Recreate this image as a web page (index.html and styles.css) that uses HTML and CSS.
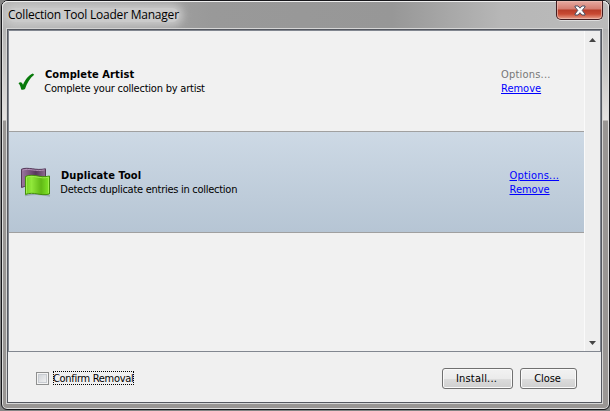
FILE: index.html
```html
<!DOCTYPE html>
<html lang="en">
<head>
<meta charset="utf-8">
<title>Collection Tool Loader Manager</title>
<link rel="stylesheet" href="styles.css">
</head>
<body>
<div class="window">
  <header class="titlebar">
    <h1 class="title"><span class="title-text">Collection Tool Loader Manager</span></h1>
    <button class="close-box" aria-label="Close window">
      <svg width="12" height="11" viewBox="0 0 12 11"><path d="M1 1H4L6 3.2L8 1H11V2L8.2 5.4L11 9V10H8L6 7.7L4 10H1V9L3.8 5.4L1 2Z" fill="#fff" stroke="#4b4e61" stroke-width="1"/></svg>
    </button>
  </header>
  <main class="client">
    <section class="list-box">
      <div class="list">
        <article class="row">
          <svg class="check" width="17" height="18" viewBox="0 0 17 18"><path d="M.5 10.2C2 8.7 4 8.9 5 11.8C7.4 6.5 10.5 2.2 14.8.5L16.2 1.7C11.8 5.2 9 10 7 16.1C6 17 4.3 17 3.2 16.6C2.7 13.8 2 11.8.5 10.2Z" fill="#087a0b"/></svg>
          <div class="info info-first"><b class="name">Complete Artist</b><span class="desc desc-first">Complete your collection by artist</span></div>
          <div class="actions"><span class="option off">Options...</span><a class="remove">Remove</a></div>
        </article>
        <article class="row selected">
          <svg class="flags" width="32" height="30" viewBox="0 0 32 30">
            <defs>
              <linearGradient id="purple"><stop stop-color="#9b76a0"/><stop offset=".35" stop-color="#765179"/><stop offset=".6" stop-color="#56385b"/><stop offset="1" stop-color="#8f6b91"/></linearGradient>
              <linearGradient id="green"><stop stop-color="#72cf20"/><stop offset=".25" stop-color="#91e83b"/><stop offset=".65" stop-color="#61b915"/><stop offset="1" stop-color="#83e929"/></linearGradient>
            </defs>
            <path d="M1.5 2.2C8-.5 16 4 25.5 1.8V18.5C17 22 9 17 1.5 20.5Z" fill="url(#purple)" stroke="#55395a"/>
            <path d="M2.5 3.2C9 .8 16 5 24.5 2.9" fill="none" stroke="#b391b7"/>
            <path d="M5 28.5Q18 26 30 29" fill="none" stroke="#7f9097" stroke-width="1.5" opacity=".6"/>
            <path d="M5.5 9.5C13 6 20 11.5 29.5 9V27C20 29.5 14 24 5.5 27.5Z" fill="url(#green)" stroke="#448f0b"/>
            <path d="M6.5 26.2V10.2C14 7.5 20 12.5 28.5 10.2V26" fill="none" stroke="#a0ed50"/>
          </svg>
          <div class="info info-second"><b class="name">Duplicate Tool</b><span class="desc desc-second">Detects duplicate entries in collection</span></div>
          <div class="actions"><a class="option">Options...</a><a class="remove">Remove</a></div>
        </article>
      </div>
      <div class="scrollbar">
        <svg width="7" height="4" viewBox="0 0 7 4"><path d="M0 4L3.5 0L7 4Z" fill="#444"/></svg>
        <svg width="7" height="4" viewBox="0 0 7 4"><path d="M0 0H7L3.5 4Z" fill="#444"/></svg>
      </div>
    </section>
    <footer class="footer">
      <label class="confirm"><span class="checkbox"></span><span class="confirm-label">Confirm Removal</span></label>
      <button class="button install"><span>Install...</span></button>
      <button class="button dismiss"><span>Close</span></button>
    </footer>
  </main>
</div>
</body>
</html>
```
FILE: styles.css
```css
* { box-sizing: border-box; }
body { margin: 0; width: 610px; height: 411px; overflow: hidden; background: #858585; font: 11px/14px "DejaVu Sans Condensed", "DejaVu Sans", sans-serif; color: #000; }
.window { width: 609px; height: 410px; margin-left: 1px; border: 1px solid #17171b; border-radius: 7px 7px 6px 6px; padding: 0 6px 6px 5px; background: linear-gradient(#b4b4b4 0 28px, #c9c7c5 70px, #e6e3e1 119px, #999694 120px, #999694); box-shadow: inset 0 0 0 1px #dedede; }
.titlebar { height: 28px; margin: 0 -6px 0 -5px; padding: 0 6px 0 6px; display: flex; justify-content: space-between; border-radius: 6px 6px 0 0; background: linear-gradient(90deg, #b4b4b4, #999 210px, #979797 390px, #b7b7b7 500px, #bbb); box-shadow: inset 0 1px #eee, inset 1px 0 #e4e4e4, inset -1px 0 #e4e4e4; }
.title { margin: 5px 0 0; font: 12px/18px "Open Sans", sans-serif; }
.title-text { display: block; white-space: nowrap; letter-spacing: -.22px; background: #cacaca; box-shadow: 0 0 8px 4px #cacaca; clip-path: inset(-6px -20px -7px -5px); border-radius: 9px; height: 14px; margin-top: 2px; line-height: 14px; }
.close-box { width: 47px; height: 19px; padding: 0; border: 1px solid #421c20; border-top: 0; border-radius: 0 0 5px 5px; display: flex; align-items: center; justify-content: center; background: linear-gradient(#e6aaa1, #d47d70 8px, #b83d29 9px, #c84a33 13px, #e9a08b); box-shadow: inset 0 0 0 1px #edc0b5aa, 0 1px #ddd; }
.client { width: 595px; height: 374px; border: 1px solid #555860; background: #f0f0f0; outline: 1px solid #d6d6d6; }
.list-box { display: flex; width: 593px; height: 322px; border: 1px solid #828790; background: #f1f1f1; }
.list { width: 576px; }
.row { display: flex; height: 101px; border-bottom: 1px solid #a0a0a0; padding-left: 10px; white-space: nowrap; }
.selected { background: linear-gradient(#cdd9e5, #b6c5d4); }
.check { margin: 42px 1px 0 -1px; }
.info { display: flex; flex-direction: column; padding-top: 37px; }
.info-first { margin-left: 9px; width: 456.5px; }
.flags { margin: 35px 0 0 1px; }
.info-second { margin-left: 9px; width: 449px; }
.name { letter-spacing: .1px; }
.desc { margin-left: -.7px; }
.desc-first { letter-spacing: -.22px; }
.desc-second { letter-spacing: -.27px; }
.actions { display: flex; flex-direction: column; align-items: flex-start; padding-top: 37px; margin-left: -.5px; }
.option, .remove { color: #00f; text-decoration: underline; }
.option { letter-spacing: .2px; }
.off { color: #777; text-decoration: none; }
.scrollbar { width: 16px; flex: none; border-left: 1px solid #fafafa; background: #eee; display: flex; flex-direction: column; align-items: center; justify-content: space-between; padding: 7px 0 6px; }
.footer { display: flex; height: 50px; padding: 16px 24px 0 28px; }
.confirm { display: flex; width: 406px; padding-top: 3px; }
.checkbox { width: 13px; height: 13px; margin-top: 1px; border: 1px solid #8e8f8f; background: linear-gradient(135deg, #cbcfd5, #f6f6f6); box-shadow: inset 0 0 0 1px #f4f4f4, inset 0 0 0 2px #c8ccd2; }
.confirm-label { height: 14px; margin-left: 4px; outline: 1px dotted #000; outline-offset: -1px; width: 81px; white-space: nowrap; letter-spacing: -.3px; line-height: 15px; }
.button { height: 21px; padding: 0 2px 0 0; border: 1px solid #707070; border-radius: 3px; background: linear-gradient(#f2f2f2, #ebebeb 50%, #dddddd 50%, #cfcfcf); box-shadow: inset 0 0 0 1px #fafafa; font: inherit; color: #000; }
.install { width: 71px; letter-spacing: .2px; }
.dismiss { width: 57px; margin-left: 7px; letter-spacing: -.1px; }
```
